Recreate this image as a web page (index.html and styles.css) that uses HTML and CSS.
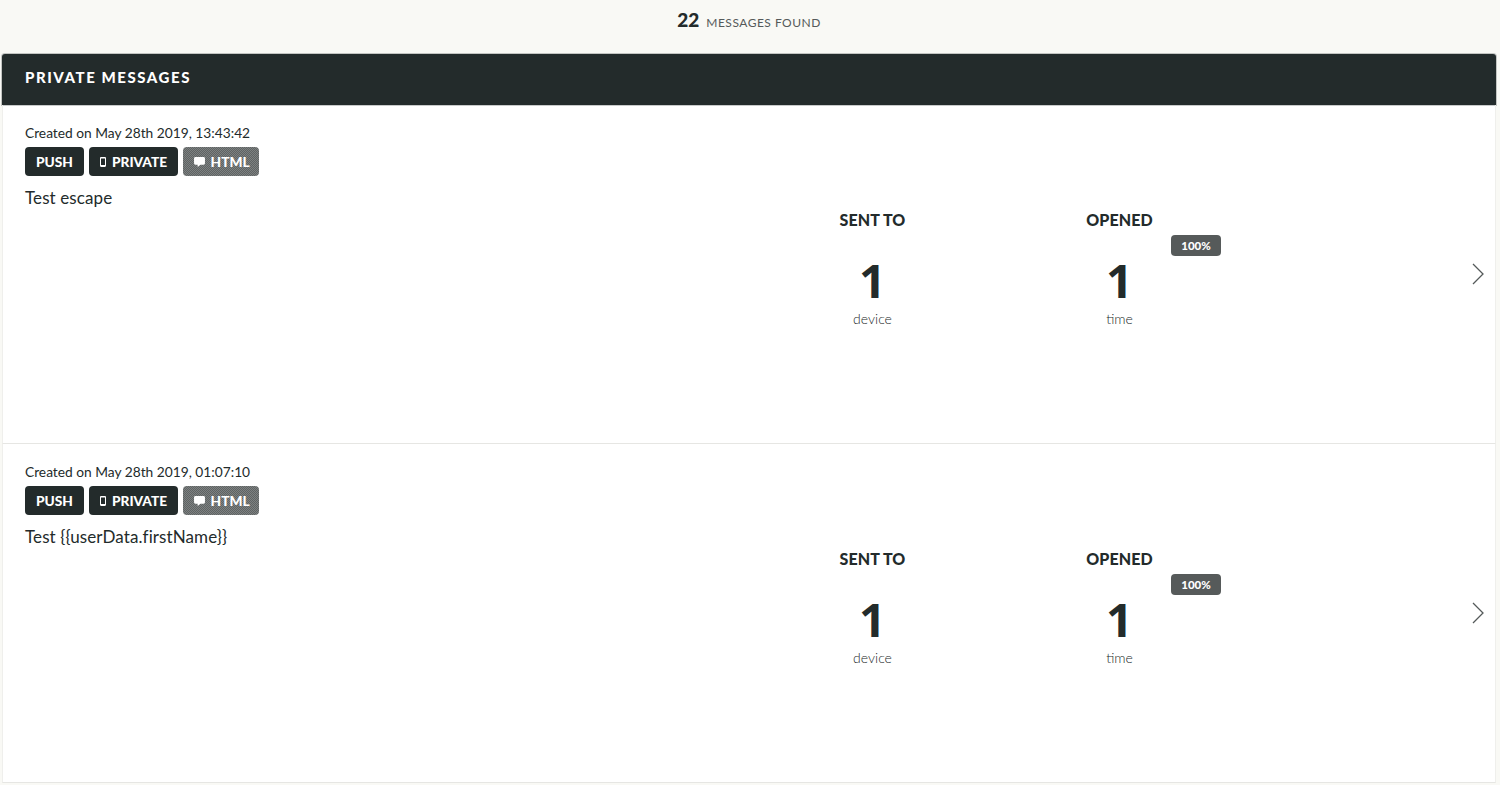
FILE: index.html
```html
<!DOCTYPE HTML>
<html>

<head>
  <title>Private messages</title>
  <meta charset="utf-8">
  <link rel="stylesheet" href="styles.css">
</head>
<body>
  <p class="found"><strong>22</strong> <span>Messages found</span></p>

  <section class="panel">
    <h2 class="panel-title">Private messages</h2>

    <div class="message">
      <div class="info">
        <p class="created">Created on May 28th 2019, 13:43:42</p>
        <div class="badges">
          <span class="badge">Push</span>
          <span class="badge">
            <svg class="icon-phone" viewBox="0 0 6 10"><path d="M1.2 0h3.6C5.5 0 6 .5 6 1.2v7.6C6 9.500 5.500 10 4.800 10H1.200C.5 10 0 9.500 0 8.800V1.200C0 .5.500 0 1.200 0zM1 1.500V8h4V1.500z" fill-rule="evenodd"/></svg>
            Private
          </span>
          <span class="badge badge-muted">
            <svg class="icon-chat" viewBox="0 0 12 11"><path d="M1.500 0h9C11.300 0 12 .7 12 1.500v5.500c0 .8-.7 1.500-1.500 1.500H7L4 11V8.500H1.500C.7 8.500 0 7.800 0 7V1.500C0 .7.700 0 1.500 0z"/></svg>
            HTML
          </span>
        </div>
        <p class="text">Test escape</p>
      </div>
      <div class="stat">
        <h3>Sent to</h3>
        <div class="number">1</div>
        <div class="unit">device</div>
      </div>
      <div class="stat">
        <h3>Opened</h3>
        <span class="percent">100%</span>
        <div class="number">1</div>
        <div class="unit">time</div>
      </div>
      <div class="more">
        <svg class="chevron" viewBox="0 0 12 22"><path d="M1 1l10 10L1 21"/></svg>
      </div>
    </div>

    <div class="message">
      <div class="info">
        <p class="created">Created on May 28th 2019, 01:07:10</p>
        <div class="badges">
          <span class="badge">Push</span>
          <span class="badge">
            <svg class="icon-phone" viewBox="0 0 6 10"><path d="M1.2 0h3.6C5.5 0 6 .5 6 1.2v7.6C6 9.500 5.500 10 4.800 10H1.200C.5 10 0 9.500 0 8.800V1.200C0 .5.500 0 1.200 0zM1 1.500V8h4V1.500z" fill-rule="evenodd"/></svg>
            Private
          </span>
          <span class="badge badge-muted">
            <svg class="icon-chat" viewBox="0 0 12 11"><path d="M1.500 0h9C11.300 0 12 .7 12 1.500v5.500c0 .8-.7 1.500-1.500 1.500H7L4 11V8.500H1.500C.7 8.500 0 7.800 0 7V1.500C0 .7.700 0 1.500 0z"/></svg>
            HTML
          </span>
        </div>
        <p class="text">Test {{userData.firstName}}</p>
      </div>
      <div class="stat">
        <h3>Sent to</h3>
        <div class="number">1</div>
        <div class="unit">device</div>
      </div>
      <div class="stat">
        <h3>Opened</h3>
        <span class="percent">100%</span>
        <div class="number">1</div>
        <div class="unit">time</div>
      </div>
      <div class="more">
        <svg class="chevron" viewBox="0 0 12 22"><path d="M1 1l10 10L1 21"/></svg>
      </div>
    </div>
  </section>
</body>

</html>
```

FILE: styles.css
```css
* {
  box-sizing: border-box;
}
html {
  font-family: Lato, "Open Sans", sans-serif;
}
body {
  margin: 0;
  padding: 0 4px 0 2px;
  height: 785px;
  overflow: hidden;
  background-color: #f9f9f5;
  color: #232b2b;
}
p {
  margin: 0;
}
.found {
  height: 54px;
  padding-top: 8px;
  text-align: center;
  line-height: 24px;
}
.found strong {
  font-size: 19px;
  font-weight: 900;
}
.found span {
  margin-left: 3px;
  font-size: 12px;
  letter-spacing: .5px;
  text-transform: uppercase;
  color: #555a5a;
}
.panel {
  background-color: #fff;
}
.panel-title {
  margin: 0;
  height: 51px;
  padding-left: 23px;
  font-size: 15px;
  line-height: 47px;
  font-weight: 900;
  letter-spacing: 1.55px;
  text-transform: uppercase;
  color: #fff;
  background-color: #232b2b;
  border-radius: 3px 3px 0 0;
  box-shadow: 0 0 0 1px rgba(35, 43, 43, .25);
}
.message {
  display: flex;
  height: 339px;
  border-bottom: 1px solid #e6e6e3;
  border-left: 1px solid #efefec;
  border-right: 1px solid #efefec;
}
.info {
  width: 746px;
  padding: 20px 0 0 22px;
}
.created {
  font-size: 13.75px;
  line-height: 16px;
}
.badges {
  display: flex;
  gap: 5px;
  margin-top: 6px;
}
.badge {
  display: flex;
  align-items: center;
  gap: 6px;
  height: 29px;
  padding: 0 11px;
  font-size: 13.7px;
  font-weight: 900;
  text-transform: uppercase;
  color: #fff;
  background-color: #232b2b;
  border-radius: 4px;
}
.badge + .badge {
  padding-right: 10.5px;
}
.badge-muted.badge-muted {
  padding-right: 9.5px;
  background: repeating-conic-gradient(#5f6363 0 25%, #7d8181 0 50%) 0 0 / 2px 2px;
}
.icon-phone {
  width: 6px;
  height: 10px;
  fill: #fff;
}
.icon-chat {
  width: 11px;
  height: 10px;
  fill: #fff;
}
.text {
  margin-top: 11px;
  font-size: 17px;
  letter-spacing: .1px;
  line-height: 22px;
}
.stat {
  position: relative;
  width: 247px;
  padding-top: 104px;
  text-align: center;
}
.stat h3 {
  margin: 0;
  font-size: 16px;
  letter-spacing: .1px;
  line-height: 22px;
  font-weight: 900;
  text-transform: uppercase;
}
.number {
  margin-top: 19px;
  font-family: "Open Sans", sans-serif;
  font-size: 47px;
  line-height: 60px;
  font-weight: 700;
}
.unit {
  font-size: 14px;
  font-weight: 300;
  line-height: 18px;
  color: #232b2b;
}
.percent {
  position: absolute;
  top: 130px;
  left: 175px;
  width: 50px;
  height: 21px;
  font-size: 11.5px;
  line-height: 21px;
  font-weight: 900;
  color: #fff;
  background-color: #565a5a;
  border-radius: 4px;
}
.more {
  flex: 1;
  display: flex;
  align-items: center;
  justify-content: flex-end;
  padding-right: 11px;
}
.chevron {
  width: 12px;
  height: 22px;
  fill: none;
  stroke: #555a5a;
  stroke-width: 1.3;
}
```
